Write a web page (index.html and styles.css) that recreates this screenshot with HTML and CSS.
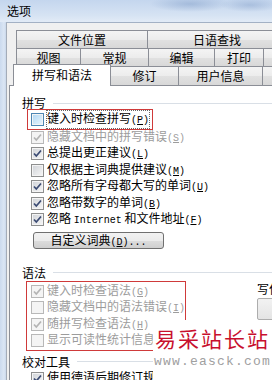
FILE: index.html
```html
<!DOCTYPE html>
<html lang="zh-CN">
<head>
    <meta charset="UTF-8">
    <meta name="viewport" content="width=device-width, initial-scale=1.0">
    <title>选项</title>
    <link rel="stylesheet" href="styles.css">
</head>
<body>
    <div class="window">
        <div class="titlebar">选项</div>
        <div class="client">
            <div class="tabs">
                <div class="tab-row">
                    <div class="tab w132">文件位置</div>
                    <div class="tab w140">日语查找</div>
                </div>
                <div class="tab-row">
                    <div class="tab w65">视图</div>
                    <div class="tab w69">常规</div>
                    <div class="tab w67">编辑</div>
                    <div class="tab w50">打印</div>
                    <div class="tab w40"></div>
                </div>
                <div class="tab-row front">
                    <div class="tab selected">拼写和语法</div>
                    <div class="tab w69">修订</div>
                    <div class="tab w85">用户信息</div>
                    <div class="tab w40"></div>
                </div>
            </div>

            <div class="panel">
                <div class="group-title">拼写</div>
                <div class="options">
                    <div class="opt marked">
                        <span class="cb hover"></span>
                        <span class="lbl focus">键入时检查拼写<span class="k">(<u>P</u>)</span></span>
                    </div>
                    <div class="opt disabled">
                        <span class="cb"><svg viewBox="0 0 11 11"><path d="M2 5.5 L4.3 8 L9 2.5"/></svg></span>
                        <span class="lbl">隐藏文档中的拼写错误<span class="k">(<u>S</u>)</span></span>
                    </div>
                    <div class="opt">
                        <span class="cb"><svg viewBox="0 0 11 11"><path d="M2 5.5 L4.3 8 L9 2.5"/></svg></span>
                        <span class="lbl">总提出更正建议<span class="k">(<u>L</u>)</span></span>
                    </div>
                    <div class="opt">
                        <span class="cb"></span>
                        <span class="lbl">仅根据主词典提供建议<span class="k">(<u>M</u>)</span></span>
                    </div>
                    <div class="opt">
                        <span class="cb"><svg viewBox="0 0 11 11"><path d="M2 5.5 L4.3 8 L9 2.5"/></svg></span>
                        <span class="lbl">忽略所有字母都大写的单词<span class="k">(<u>U</u>)</span></span>
                    </div>
                    <div class="opt">
                        <span class="cb"><svg viewBox="0 0 11 11"><path d="M2 5.5 L4.3 8 L9 2.5"/></svg></span>
                        <span class="lbl">忽略带数字的单词<span class="k">(<u>B</u>)</span></span>
                    </div>
                    <div class="opt">
                        <span class="cb"><svg viewBox="0 0 11 11"><path d="M2 5.5 L4.3 8 L9 2.5"/></svg></span>
                        <span class="lbl">忽略 <span class="k">Internet</span> 和文件地址<span class="k">(<u>F</u>)</span></span>
                    </div>
                </div>
                <button class="btn">自定义词典<span class="k">(<u>D</u>)...</span></button>

                <div class="group-title grammar-title">语法</div>
                <div class="grammar">
                    <div class="marked-box">
                        <div class="opt disabled">
                            <span class="cb"><svg viewBox="0 0 11 11"><path d="M2 5.5 L4.3 8 L9 2.5"/></svg></span>
                            <span class="lbl">键入时检查语法<span class="k">(<u>G</u>)</span></span>
                        </div>
                        <div class="opt disabled">
                            <span class="cb"></span>
                            <span class="lbl">隐藏文档中的语法错误<span class="k">(<u>I</u>)</span></span>
                        </div>
                        <div class="opt disabled">
                            <span class="cb"><svg viewBox="0 0 11 11"><path d="M2 5.5 L4.3 8 L9 2.5"/></svg></span>
                            <span class="lbl">随拼写检查语法<span class="k">(<u>H</u>)</span></span>
                        </div>
                        <div class="opt disabled">
                            <span class="cb"></span>
                            <span class="lbl">显示可读性统计信息<span class="k">(<u>A</u>)</span></span>
                        </div>
                    </div>
                    <div class="style-col">
                        <div class="style-label">写作风格<span class="k">(<u>W</u>):</span></div>
                        <div class="select"></div>
                    </div>
                </div>

                <div class="group-title tools-title">校对工具</div>
                <div class="options">
                    <div class="opt">
                        <span class="cb"><svg viewBox="0 0 11 11"><path d="M2 5.5 L4.3 8 L9 2.5"/></svg></span>
                        <span class="lbl">使用德语后期修订规则<span class="k">(<u>R</u>)</span></span>
                    </div>
                </div>
            </div>
        </div>

        <!-- site stamp laid over the bottom right corner -->
        <div class="watermark">
            <div class="wm-name">易采站长站</div>
            <div class="wm-url">www.easck.com</div>
        </div>
    </div>
</body>
</html>
```

FILE: styles.css
```css
body {
    margin: 0;
    font-family: "Noto Sans CJK SC", "Noto Sans", sans-serif;
    font-size: 12px;
    color: #000;
}
.window {
    position: relative;
    width: 272px;
    height: 380px;
    overflow: hidden;
    background: linear-gradient(to right, #cbdaee, #dbe6f4 4px, #c9d7ea 6px);
}
.titlebar {
    height: 22px;
    line-height: 22px;
    padding-left: 7px;
    background:
        radial-gradient(ellipse 40px 8px at 190px 4px, rgba(120, 150, 195, 0.45), transparent),
        radial-gradient(ellipse 30px 7px at 250px 5px, rgba(120, 150, 195, 0.4), transparent),
        linear-gradient(to bottom, #c4d6ee, #d6e3f3 70%, #e2ebf6);
}
.client {
    margin-left: 6px;
    height: 357px;
    padding: 7px 0 0 2px;
    border-top: 1px solid #a3b1c4;
    border-left: 1px solid #a4acb8;
    background: #f0f0f0;
    width: 320px;
}

/* tabs */
.tab-row {
    display: flex;
    height: 18px;
    margin-left: 7px;
}
.tab-row.front {
    height: 19px;
    margin-left: 4px;
}
.tab {
    flex-shrink: 0;
    box-sizing: border-box;
    height: 100%;
    margin-right: -1px;
    border: 1px solid #8b8e96;
    border-bottom: none;
    background: linear-gradient(to bottom, #f4f4f4, #ececec 50%, #e1e1e1 51%, #d8d8d8);
    text-align: center;
    line-height: 17px;
    white-space: nowrap;
}
.tab.selected {
    position: relative;
    z-index: 1;
    width: 98px;
    height: 22px;
    margin-top: -2px;
    margin-bottom: -1px;
    line-height: 20px;
    background: #fff;
}
.w132 { width: 132px; }
.w140 { width: 140px; }
.w65 { width: 65px; }
.w69 { width: 69px; }
.w67 { width: 67px; }
.w50 { width: 50px; }
.w40 { width: 40px; }
.w85 { width: 85px; }

/* page */
.panel {
    height: 300px;
    padding: 9px 0 0 12px;
    border: 1px solid #8b8e96;
    background: #fff;
}
.group-title {
    display: flex;
    align-items: center;
    height: 16px;
    line-height: 16px;
}
.group-title::after {
    content: "";
    flex: 1;
    margin-left: 7px;
    border-top: 1px solid #d9dfe6;
}
.options {
    padding-left: 9px;
}
.opt {
    display: flex;
    align-items: center;
    height: 16.5px;
    white-space: nowrap;
}
.opt.marked {
    display: inline-flex;
    margin-left: -2px;
    padding: 0 2px;
    outline: 1px solid #cf3a3a;
    outline-offset: 1px;
}
.lbl {
    margin-left: 3px;
    line-height: 14px;
}
.lbl.focus {
    outline: 1px dotted #666;
}
.k {
    font-family: "Liberation Mono", monospace;
    font-size: 10px;
}
.disabled {
    color: #9c9c9c;
}

/* checkbox */
.cb {
    flex-shrink: 0;
    box-sizing: border-box;
    width: 13px;
    height: 13px;
    border: 1px solid #8e8f8f;
    box-shadow: inset 0 0 0 1px #f4f4f4;
    background: linear-gradient(135deg, #cfd2d7, #f7f7f7);
}
.cb svg {
    display: block;
    width: 11px;
    height: 11px;
    fill: none;
    stroke: #3b4b73;
    stroke-width: 1.7;
}
.cb.hover {
    border-color: #4d86b3;
    background: linear-gradient(135deg, #b0d6f3, #eaf6fd);
}
.disabled .cb {
    border-color: #b8b8b8;
    background: #f4f4f4;
}
.disabled .cb svg {
    stroke: #b4b4b4;
}

.btn {
    display: block;
    box-sizing: border-box;
    width: 131px;
    height: 17px;
    margin: 4px 0 0 11px;
    padding: 0;
    border: 1px solid #707070;
    border-radius: 3px;
    background: linear-gradient(to bottom, #f2f2f2, #ebebeb 50%, #dddddd 51%, #cfcfcf);
    font: inherit;
    line-height: 14px;
    color: #000;
}

.grammar-title {
    margin-top: 16px;
}
.grammar {
    display: flex;
}
.marked-box {
    box-sizing: border-box;
    width: 163px;
    margin-left: 4px;
    padding: 1px 0 1px 4px;
    border: 1px solid #cf3a3a;
}
.style-col {
    margin-left: 71px;
    white-space: nowrap;
}
.style-label {
    height: 16px;
    line-height: 16px;
}
.select {
    width: 90px;
    height: 20px;
    margin-top: 1px;
    border: 1px solid #adadad;
    border-radius: 2px;
    background: linear-gradient(to bottom, #f2f2f2, #e4e4e4);
}
.tools-title {
    margin-top: 3px;
}

/* watermark */
.watermark {
    position: absolute;
    left: 153px;
    top: 320px;
    width: 130px;
    height: 60px;
    background: #fff;
}
.wm-name {
    margin: 6px 0 0 2px;
    font-size: 21px;
    line-height: 24px;
    letter-spacing: 2px;
    color: #c8102e;
    white-space: nowrap;
}
.wm-url {
    margin: 5px 0 0 1px;
    font-family: "Liberation Mono", monospace;
    font-size: 13px;
    line-height: 14px;
    letter-spacing: 1.2px;
    color: #a0a0a0;
    white-space: nowrap;
}
```
